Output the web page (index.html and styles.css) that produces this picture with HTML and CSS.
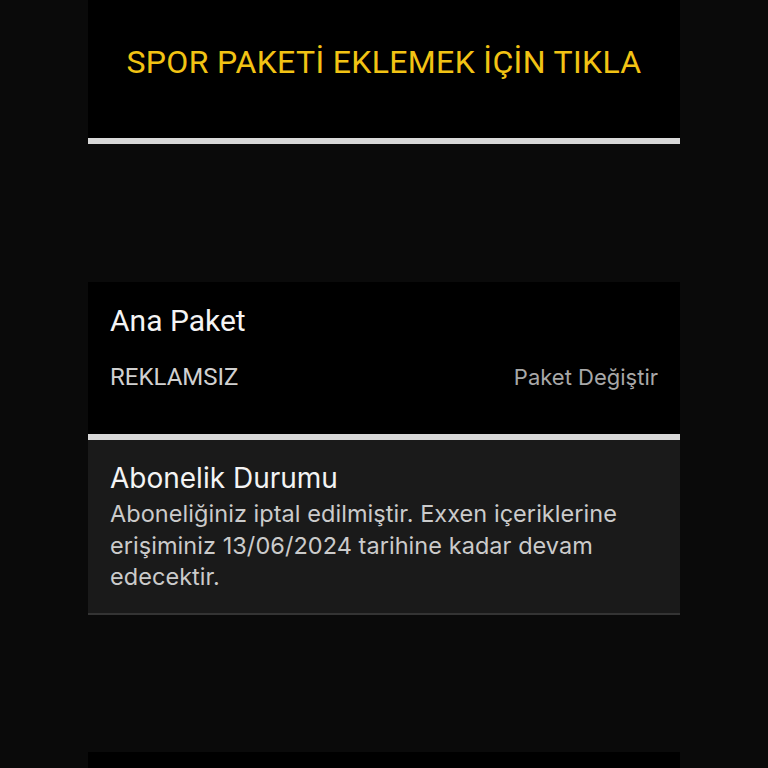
FILE: index.html
```html
<!DOCTYPE html>
<html lang="tr">
<head>
<meta charset="utf-8">
<title>Paketler</title>
<link rel="stylesheet" href="styles.css">
</head>
<body>
<main class="column">
  <section class="sport-card">
    <span class="sport-label">SPOR PAKETİ EKLEMEK İÇİN TIKLA</span>
  </section>
  <div class="divider"></div>

  <section class="package-card">
    <h2 class="package-title">Ana Paket</h2>
    <div class="package-row">
      <span class="package-type">REKLAMSIZ</span>
      <span class="package-change">Paket Değiştir</span>
    </div>
  </section>
  <div class="divider"></div>

  <section class="status-card">
    <h3 class="status-title">Abonelik Durumu</h3>
    <p class="status-text">Aboneliğiniz iptal edilmiştir. Exxen içeriklerine erişiminiz 13/06/2024 tarihine kadar devam edecektir.</p>
  </section>

  <section class="next-card"></section>
</main>
</body>
</html>
```

FILE: styles.css
```css
html, body {
  margin: 0;
  padding: 0;
  background: #0a0a0a;
  height: 768px;
  overflow: hidden;
}

.column {
  width: 592px;
  margin-left: 88px;
  display: flex;
  flex-direction: column;
}

.sport-card {
  height: 138px;
  background: #000;
  display: flex;
  justify-content: center;
  box-sizing: border-box;
  padding-top: 43px;
}

.sport-label {
  font-family: Roboto, "Liberation Sans", sans-serif;
  font-size: 32px;
  line-height: 38px;
  letter-spacing: 0.35px;
  color: #f2c314;
  white-space: nowrap;
}

.divider {
  height: 6px;
  background: #d8d8d8;
}

.package-card {
  margin-top: 138px;
  height: 152px;
  box-sizing: border-box;
  background: #000;
  padding: 22px 22px 0 22px;
  display: flex;
  flex-direction: column;
}

.package-title {
  margin: 0;
  font-family: Roboto, "Liberation Sans", sans-serif;
  font-weight: 400;
  font-size: 30px;
  line-height: 34px;
  color: #f4f4f4;
}

.package-row {
  margin-top: 25px;
  display: flex;
  justify-content: space-between;
  align-items: baseline;
}

.package-type {
  font-family: Roboto, "Liberation Sans", sans-serif;
  font-size: 24px;
  line-height: 28px;
  color: #d0d0d0;
}

.package-change {
  font-family: Inter, "Liberation Sans", sans-serif;
  font-size: 22px;
  line-height: 28px;
  color: #a8a8a8;
}

.status-card {
  height: 175px;
  box-sizing: border-box;
  background: #1a1a1a;
  border-bottom: 2px solid #343434;
  padding: 21px 22px 0 22px;
}

.status-title {
  margin: 0;
  font-family: Inter, "Liberation Sans", sans-serif;
  font-weight: 400;
  font-size: 28px;
  line-height: 34px;
  color: #f4f4f4;
}

.status-text {
  margin: 3px 0 0 0;
  font-family: Inter, "Liberation Sans", sans-serif;
  font-size: 23.5px;
  line-height: 31.5px;
  letter-spacing: 0.05px;
  color: #cbcbcb;
}

.next-card {
  margin-top: 137px;
  height: 16px;
  background: #000;
}
```
